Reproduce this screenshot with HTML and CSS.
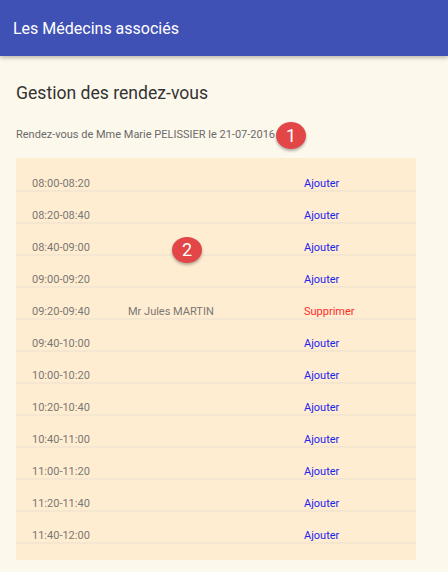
FILE: index.html
```html
<!DOCTYPE html>
<html lang="fr">
<head>
  <meta charset="UTF-8">
  <meta name="viewport" content="width=device-width, initial-scale=1.0">
  <title>Les Médecins associés</title>
  <link rel="stylesheet" href="styles.css">
</head>
<body>
  <header class="toolbar">
    <h1 class="toolbar-title">Les Médecins associés</h1>
  </header>
  <main class="content">
    <h2 class="page-title">Gestion des rendez-vous</h2>
    <p class="subtitle">Rendez-vous de Mme Marie PELISSIER le 21-07-2016<span class="badge badge-one">1</span></p>
    <div class="slots">
      <span class="badge badge-two">2</span>
      <div class="slot"><span class="slot-time">08:00-08:20</span><span class="slot-name"></span><a class="slot-action add">Ajouter</a></div>
      <div class="slot"><span class="slot-time">08:20-08:40</span><span class="slot-name"></span><a class="slot-action add">Ajouter</a></div>
      <div class="slot"><span class="slot-time">08:40-09:00</span><span class="slot-name"></span><a class="slot-action add">Ajouter</a></div>
      <div class="slot"><span class="slot-time">09:00-09:20</span><span class="slot-name"></span><a class="slot-action add">Ajouter</a></div>
      <div class="slot"><span class="slot-time">09:20-09:40</span><span class="slot-name">Mr Jules MARTIN</span><a class="slot-action remove">Supprimer</a></div>
      <div class="slot"><span class="slot-time">09:40-10:00</span><span class="slot-name"></span><a class="slot-action add">Ajouter</a></div>
      <div class="slot"><span class="slot-time">10:00-10:20</span><span class="slot-name"></span><a class="slot-action add">Ajouter</a></div>
      <div class="slot"><span class="slot-time">10:20-10:40</span><span class="slot-name"></span><a class="slot-action add">Ajouter</a></div>
      <div class="slot"><span class="slot-time">10:40-11:00</span><span class="slot-name"></span><a class="slot-action add">Ajouter</a></div>
      <div class="slot"><span class="slot-time">11:00-11:20</span><span class="slot-name"></span><a class="slot-action add">Ajouter</a></div>
      <div class="slot"><span class="slot-time">11:20-11:40</span><span class="slot-name"></span><a class="slot-action add">Ajouter</a></div>
      <div class="slot"><span class="slot-time">11:40-12:00</span><span class="slot-name"></span><a class="slot-action add">Ajouter</a></div>
    </div>
  </main>
</body>
</html>
```

FILE: styles.css
```css
body {
  margin: 0;
  font-family: Roboto, "Noto Sans", sans-serif;
  background-color: #fdf8ec;
}
.toolbar {
  height: 56px;
  background-color: #3f51b5;
  box-shadow: 0 2px 4px rgba(0, 0, 0, 0.25);
  display: flex;
  align-items: center;
  padding: 0 13px;
  box-sizing: border-box;
}
.toolbar-title {
  margin: 0;
  color: #fff;
  font-size: 16px;
  font-weight: 400;
}
.content {
  padding: 0 16px;
}
.page-title {
  margin: 0;
  padding-top: 26px;
  font-size: 17.6px;
  font-weight: 400;
  color: #333;
  line-height: 22px;
}
.subtitle {
  margin: 0;
  padding-top: 24px;
  font-size: 11px;
  line-height: 14px;
  color: #6a6a6a;
  position: relative;
}
.slots {
  position: relative;
  margin-top: 16px;
  width: 400px;
  background-color: #ffedd2;
  padding-top: 2px;
  padding-bottom: 16px;
}
.slot {
  display: flex;
  align-items: flex-end;
  height: 30px;
  padding-left: 16px;
  border-bottom: 2px solid #f5e6d2;
  font-size: 11px;
  line-height: 13px;
}
.slot-time {
  width: 96px;
  color: #7b7772;
}
.slot-name {
  width: 176px;
  color: #7b7772;
}
.slot-action.add {
  color: #2222ee;
}
.slot-action.remove {
  color: #ff2a2a;
}

/* Callout markers */
.badge {
  position: absolute;
  width: 30px;
  height: 27px;
  border-radius: 50%;
  background-color: #e24646;
  color: #fff;
  font-size: 18px;
  line-height: 27px;
  text-align: center;
  box-shadow: 0 2px 3px rgba(0, 0, 0, 0.3);
}
.badge-one {
  left: 260px;
  top: 18px;
}
.badge-two {
  left: 156px;
  top: 79px;
  height: 26px;
  line-height: 26px;
}
```
